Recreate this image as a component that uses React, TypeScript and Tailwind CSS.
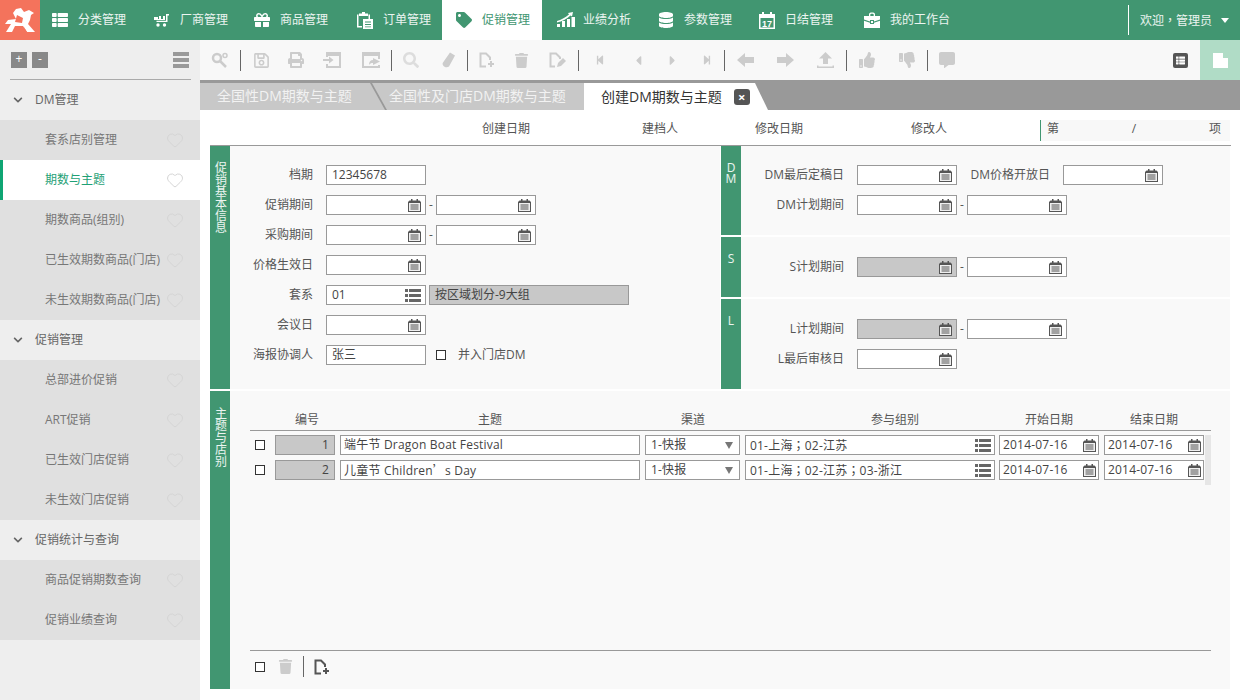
import React from "react";
import { Heart } from "lucide-react";
import {
  FaThList, FaGift, FaTag, FaDatabase, FaChevronDown, FaRegSave, FaPrint, FaSearch,
  FaTrash, FaStepBackward, FaStepForward, FaCaretLeft, FaCaretRight,
  FaThumbsUp, FaThumbsDown, FaCommentAlt,
} from "react-icons/fa";

const Logo = () => (
  <svg width="40" height="40" viewBox="0 0 40 40">
    <path fill="#fff" d="M16 9l5-1 3 4 5-2 5 3-3 2-1 5-2 4 7 8h-8l-4-6h-8l-3 6H6l5-8H5l3-4 8-1-3-6z" />
    <path fill="#f4735c" d="M17 15l6 3-1 5-7-1zM24 27l3 5h-2z" />
  </svg>
);

const CartIcon = () => (
  <svg width="16" height="16" viewBox="0 0 16 16" fill="#fff">
    <path d="M0 5h4v2h1V4h2v3h2V4h2v4H0zM12 2h3v1.500h-1.500V10H2.500V8.700h9.500z" />
    <circle cx="4" cy="13" r="1.700" />
    <circle cx="10.500" cy="13" r="1.700" />
  </svg>
);

const OrderIcon = () => (
  <svg width="16" height="17" viewBox="0 0 16 17" fill="#fff">
    <path d="M5 0h3v1.500h3V4H2V1.500h3zM0 2.500h1.500V14H5v1.500H0zM11.500 2.500H13V7h-1.500z" />
    <path d="M6 7h10v10H6z" />
    <path fill="#419671" d="M8 9.500h6v1H8zM8 12h6v1H8zM8 14.500h6v.8H8z" />
  </svg>
);

const ChartIcon = () => (
  <svg width="18" height="16" viewBox="0 0 18 16" fill="#fff">
    <path d="M0 12h3v3H0zM5 9h3v6H5zM10 7h3v8h-3zM14.500 5H18v10h-3.500z" />
    <path d="M0 9c4-1 8-3.500 12-6.500L11 1l5-1-1 4.500-1.500-1C9.500 7 5 9.500 0 10.500z" />
  </svg>
);

const CalendarDayIcon = () => (
  <svg width="16" height="17" viewBox="0 0 16 17">
    <path fill="#fff" d="M0 2h3V0h2v2h6V0h2v2h3v15H0zm1.500 4v9.500h13V6z" />
    <text x="8" y="14.500" textAnchor="middle" fontSize="9" fontWeight="700" fill="#fff" fontFamily="Liberation Sans, sans-serif">17</text>
  </svg>
);

const CaseIcon = () => (
  <svg width="16" height="16" viewBox="0 0 16 16" fill="#fff">
    <path d="M5 2.500C5 1 6 .5 8 .5s3 .5 3 2V4h-1.300V2.800c0-.7-.5-1-1.700-1s-1.700.3-1.700 1V4H5z" />
    <path d="M0 4h16v3.500l-6 2V8H6v1.500l-6-2zM0 8.700l6 2V12h4v-1.300l6-2V16H0zM7 9h2v2H7z" />
  </svg>
);

const SignInIcon = () => (
  <svg width="18" height="16" viewBox="0 0 18 16" fill="#ccc">
    <path d="M3 0h15v16H3v-4h2v2h11V4H5v1H3zM0 7h6V4.500L10.500 8 6 11.500V9H0z" />
  </svg>
);

const ShareIcon = () => (
  <svg width="20" height="16" viewBox="0 0 20 16" fill="#ccc">
    <path d="M0 0h18v7h-2V4H2v10h14v-1h2v3H0zM11 6l7 3.500L11 13v-2c-2 0-3 .5-4 2 0-3.500 1.500-5 4-5z" />
  </svg>
);

const SearchUserIcon = () => (
  <svg width="18" height="16" viewBox="0 0 18 16" fill="none" stroke="#ccc">
    <circle cx="6" cy="6" r="4" strokeWidth="2.500" />
    <path d="M9 9l6 6" strokeWidth="2.500" />
    <circle cx="14" cy="3.500" r="2" strokeWidth="1.500" />
  </svg>
);

const EraserIcon = () => (
  <svg width="14" height="16" viewBox="0 0 14 16" fill="#ccc">
    <path d="M8 0.500l5 3-6 11c-1.500 1.200-4 1-5.500-.5-1-1.200-1.200-2.500-.5-3.500z" />
  </svg>
);

const BlockArrow = ({ left }: { left?: boolean }) => (
  <svg width="17" height="14" viewBox="0 0 17 14" fill="#ccc" className={left ? "-scale-x-100" : ""}>
    <path d="M0 4h9V0l8 7-8 7v-4H0z" />
  </svg>
);

const FilePlusIcon = ({ color = "#ccc" }: { color?: string }) => (
  <svg width="16" height="16" viewBox="0 0 16 16" fill="none">
    <path d="M7 14.500H1.500v-13H7L11 5.500V8" stroke={color} strokeWidth="2" />
    <path d="M9 12h6M12 9v6" stroke={color} strokeWidth="2" />
  </svg>
);

const FileEditIcon = () => (
  <svg width="18" height="16" viewBox="0 0 18 16" fill="none">
    <path d="M6 14.500H1.500v-13H7L11 5.500V7" stroke="#ccc" strokeWidth="2" />
    <path d="M8 15l1-4 5-5 3 3-5 5z" fill="#ccc" />
  </svg>
);

const UploadIcon = () => (
  <svg width="17" height="16" viewBox="0 0 17 16" fill="#ccc">
    <path d="M8.500 0L15 6.500h-4V12H6V6.500H2zM0 13.500h1.500V14.500h14V13.500H17V16H0z" />
  </svg>
);

const CalIcon = () => (
  <svg width="13" height="13" viewBox="0 0 13 13" className="shrink-0">
    <path fill="#555" d="M3 0h1.500v1.500h4V0H10v1.500h1.500L13 3v10H0V3l1.500-1.500H3z" />
    <path fill="#efefef" d="M1 4h11v8H1z" />
    <path fill="#555" d="M2.500 5.500h8v1h-8zM2.500 7.500h8v1h-8zM2.500 9.500h8v1h-8z" />
  </svg>
);

const ListIcon = () => (
  <svg width="16" height="13" viewBox="0 0 16 13" fill="#666" className="shrink-0">
    <path d="M0 0h3v3H0zM4 0h12v3H4zM0 5h3v3H0zM4 5h12v3H4zM0 10h3v3H0zM4 10h12v3H4z" />
  </svg>
);

// punctuation that sits in the middle of its cell, as in the original font
const Mid = ({ children }: { children: React.ReactNode }) => (
  <span className="[font-family:'Noto_Sans_CJK_TC',sans-serif]">{children}</span>
);

const Box = ({ w, value, gray, icon, right, pad = "px-[5px]" }: { w: string; value?: React.ReactNode; gray?: boolean; icon?: "cal" | "list"; right?: boolean; pad?: string }) => (
  <div className={`${w} ${pad} h-5 shrink-0 border border-[#999] flex items-center text-[12px] text-[#444] leading-none ${gray ? "bg-[#c8c8c8]" : "bg-white"} ${right ? "justify-end" : "justify-between"}`}>
    <span className="whitespace-pre">{value}</span>
    {icon === "cal" && <span className="-mr-[1px]"><CalIcon /></span>}
    {icon === "list" && <span className="-mr-[1px]"><ListIcon /></span>}
  </div>
);

const Dash = ({ w }: { w: string }) => <span className={`${w} text-center text-[12px] text-[#555]`}>-</span>;

const Check = ({ cls = "" }: { cls?: string }) => <span className={`block w-[10px] h-[10px] border border-[#333] bg-white shrink-0 ${cls}`} />;

const Strip = ({ text, top, tight }: { text: string; top: string; tight?: boolean }) => (
  <div className={`w-5 shrink-0 bg-[#419671] flex justify-center pr-px text-white/90 text-[12px] leading-5 ${top}`}>
    <span className={`[writing-mode:vertical-rl] [text-orientation:upright] ${tight ? "tracking-[-6px]" : ""}`}>{text}</span>
  </div>
);

const NAV = [
  { label: "分类管理", w: "w-[102px]", icon: <FaThList className="text-[16px]" /> },
  { label: "厂商管理", w: "w-[100px]", icon: <CartIcon /> },
  { label: "商品管理", w: "w-[103px]", icon: <FaGift className="text-[16px]" /> },
  { label: "订单管理", w: "w-[97px]", icon: <OrderIcon /> },
  { label: "促销管理", w: "w-[100px] mr-[3px]", icon: <FaTag className="text-[16px]" />, active: true },
  { label: "业绩分析", w: "w-[101px]", icon: <ChartIcon /> },
  { label: "参数管理", w: "w-[101px]", icon: <FaDatabase className="text-[16px]" /> },
  { label: "日结管理", w: "w-[105px]", icon: <CalendarDayIcon /> },
  { label: "我的工作台", w: "w-[120px]", icon: <CaseIcon /> },
];

const MENU = [
  { title: "DM管理", items: [["套系店别管理"], ["期数与主题", "active"], ["期数商品(组别)"], ["已生效期数商品(门店)"], ["未生效期数商品(门店)"]] },
  { title: "促销管理", items: [["总部进价促销"], ["ART促销"], ["已生效门店促销"], ["未生效门店促销"]] },
  { title: "促销统计与查询", items: [["商品促销期数查询"], ["促销业绩查询"]] },
];

// widths of the toolbar cells, the separators sit between groups
const TOOLS: { w: string; icon?: React.ReactNode; sep?: boolean }[] = [
  { w: "w-[40px]", icon: <SearchUserIcon /> },
  { w: "", sep: true },
  { w: "w-[40px]", icon: <FaRegSave className="text-[17px] text-[#ccc]" /> },
  { w: "w-[30px]", icon: <FaPrint className="text-[16px] text-[#ccc]" /> },
  { w: "w-[42px]", icon: <SignInIcon /> },
  { w: "w-[38px]", icon: <ShareIcon /> },
  { w: "", sep: true },
  { w: "w-[38px]", icon: <FaSearch className="text-[16px] text-[#ddd]" /> },
  { w: "w-[37px]", icon: <EraserIcon /> },
  { w: "", sep: true },
  { w: "w-[38px]", icon: <FilePlusIcon /> },
  { w: "w-[31px]", icon: <FaTrash className="text-[15px] text-[#ccc]" /> },
  { w: "w-[41px]", icon: <FileEditIcon /> },
  { w: "", sep: true },
  { w: "w-[42px]", icon: <FaStepBackward className="text-[10px] text-[#ccc]" /> },
  { w: "w-[35px]", icon: <FaCaretLeft className="text-[15px] text-[#ccc]" /> },
  { w: "w-[33px]", icon: <FaCaretRight className="text-[15px] text-[#ccc]" /> },
  { w: "w-[35px]", icon: <FaStepForward className="text-[10px] text-[#ccc]" /> },
  { w: "", sep: true },
  { w: "w-[40px]", icon: <BlockArrow left /> },
  { w: "w-[40px]", icon: <BlockArrow /> },
  { w: "w-[41px]", icon: <UploadIcon /> },
  { w: "", sep: true },
  { w: "w-[39px]", icon: <FaThumbsUp className="text-[16px] text-[#ccc]" /> },
  { w: "w-[41px]", icon: <FaThumbsDown className="text-[16px] text-[#ccc]" /> },
  { w: "", sep: true },
  { w: "w-[38px]", icon: <FaCommentAlt className="text-[16px] text-[#ccc]" /> },
];

const LeftRow = ({ label, children }: { label: string; children: React.ReactNode }) => (
  <div className="flex items-center h-5">
    <span className="w-[83px] text-right text-[12px] text-[#555] mr-[13px] shrink-0">{label}</span>
    {children}
  </div>
);

const RightRow = ({ label, children }: { label: string; children: React.ReactNode }) => (
  <div className="flex items-center h-5">
    <span className="w-[103px] text-right text-[12px] text-[#555] mr-[13px] shrink-0">{label}</span>
    {children}
  </div>
);

const ROWS: { no: string; title: React.ReactNode; group: React.ReactNode }[] = [
  { no: "1", title: "端午节 Dragon Boat Festival", group: <>01-上海<Mid>；</Mid>02-江苏</> },
  { no: "2", title: <>儿童节 Children<Mid>’</Mid>s Day</>, group: <>01-上海<Mid>；</Mid>02-江苏<Mid>；</Mid>03-浙江</> },
];

export default function App() {
  return (
    <div className="w-[1240px] h-[700px] overflow-hidden bg-white flex flex-col [font-family:'Open_Sans','Noto_Sans_CJK_SC',sans-serif]">
      {/* top nav */}
      <div className="h-10 shrink-0 bg-[#419671] flex">
        <div className="w-10 h-10 bg-[#f4735c] shrink-0"><Logo /></div>
        {NAV.map((n) => (
          <div key={n.label} className={`${n.w} h-10 shrink-0 flex items-center text-[12px] ${n.active ? "bg-white text-[#419671] pl-[14px]" : "text-white/90 pl-3"}`}>
            <span className={`w-[26px] flex ${n.active ? "text-[#419671]" : "text-white"}`}>{n.icon}</span>
            <span>{n.label}</span>
          </div>
        ))}
        <div className="ml-auto my-[5px] w-[112px] border-l border-white flex items-center pl-[11px] text-white/90 text-[12px]">
          <span>欢迎<Mid>，</Mid>管理员</span>
          <svg width="8" height="5" viewBox="0 0 8 5" fill="#fff" className="ml-[9px]"><path d="M0 0h8L4 5z" /></svg>
        </div>
      </div>

      <div className="flex flex-1 min-h-0">
        {/* sidebar */}
        <div className="w-[200px] shrink-0 bg-[#eeeeee]">
          <div className="h-10 flex items-center pl-[11px] pr-[11px] gap-[5px] relative">
            <span className="w-4 h-4 bg-[#888] text-white text-[12px] leading-[14px] text-center">+</span>
            <span className="w-4 h-4 bg-[#888] text-white text-[12px] leading-[14px] text-center">-</span>
            <div className="ml-auto w-4 h-4 flex flex-col justify-between">
              <span className="h-[4px] bg-[#999]" />
              <span className="h-[4px] bg-[#999]" />
              <span className="h-[4px] bg-[#999]" />
            </div>
            <span className="absolute left-[10px] w-[181px] bottom-0 h-px bg-[#aaa]" />
          </div>
          {MENU.map((g) => (
            <div key={g.title}>
              <div className="h-10 flex items-center text-[12px] text-[#666]">
                <FaChevronDown className="ml-[13px] mr-[12px] text-[10px] text-[#666]" />
                {g.title}
              </div>
              {g.items.map(([label, state]) => (
                <div key={label} className={`h-10 flex items-center justify-between pr-4 text-[12px] ${state ? "bg-white text-[#1fa176] border-l-[3px] border-[#0fa573] pl-[42px]" : "bg-[#e0e0e0] text-[#777] pl-[45px]"}`}>
                  <span className="whitespace-nowrap">{label}</span>
                  <Heart className="w-[18px] h-[18px] shrink-0 text-[#d4d4d4]" strokeWidth={1.3} />
                </div>
              ))}
            </div>
          ))}
        </div>

        {/* main */}
        <div className="flex-1 flex flex-col min-w-0">
          <div className="h-10 shrink-0 bg-[#f8f8f8] flex items-stretch">
            {TOOLS.map((t, i) =>
              t.sep ? (
                <span key={i} className="w-px h-[21px] my-auto bg-[#666] shrink-0" />
              ) : (
                <span key={i} className={`${t.w} flex items-center justify-center shrink-0`}>{t.icon}</span>
              )
            )}
            <span className="ml-auto w-10 flex items-center justify-center">
              <span className="w-[15px] h-[15px] bg-[#555] rounded-[2px] flex items-center justify-center">
                <FaThList className="text-white text-[9px]" />
              </span>
            </span>
            <span className="w-10 bg-[#b0dcc6] flex items-center justify-center">
              <span className="w-[15px] h-[15px] bg-white flex items-start justify-end">
                <span className="w-[5px] h-[5px] bg-[#b0dcc6]" />
              </span>
            </span>
          </div>

          {/* tabs */}
          <div className="h-[30px] shrink-0 bg-[#999] pt-[3px] flex text-[14px] text-[#f2f2f2]">
            <div className="w-[185px] bg-[#c8c8c8] pl-[17px] leading-[25px] [clip-path:polygon(0_0,170px_0,185px_100%,0_100%)]">全国性DM期数与主题</div>
            <div className="w-[212px] -ml-[13px] bg-[#c8c8c8] pl-[17px] leading-[25px] [clip-path:polygon(0_0,100%_0,100%_100%,15px_100%)]">全国性及门店DM期数与主题</div>
            <div className="w-[184px] bg-white text-[#333] pl-[17px] flex items-center gap-[12px] [clip-path:polygon(0_0,171px_0,100%_100%,0_100%)]">
              <span className="whitespace-nowrap -mt-[1px]">创建DM期数与主题</span>
              <span className="w-4 h-4 bg-[#555] rounded-[3px] text-white text-[13px] leading-4 text-center font-bold shrink-0">×</span>
            </div>
          </div>

          {/* record header */}
          <div className="h-[36px] shrink-0 pt-[10px] pl-[10px]">
            <div className="w-[1021px] h-[26px] border-b border-[#999] flex text-[12px] text-[#555]">
              <span className="w-[320px] text-right">创建日期</span>
              <span className="w-[148px] text-right">建档人</span>
              <span className="w-[125px] text-right">修改日期</span>
              <span className="w-[144px] text-right">修改人</span>
              <div className="ml-[93px] w-[190px] h-[21px] bg-[#f8f8f8] border-l border-[#419671] flex justify-between pl-[6px] pr-[9px]">
                <span>第</span>
                <span>/</span>
                <span>项</span>
              </div>
            </div>
          </div>

          {/* form */}
          <div className="pl-[10px] flex gap-px h-[243px] shrink-0">
            <div className="w-[510px] bg-[#f9f9f9] flex">
              <Strip text="促销基本信息" top="pt-[15px]" />
              <div className="pt-[19px] flex flex-col gap-[10px]">
                <LeftRow label="档期"><Box w="w-[100px]" value="12345678" /></LeftRow>
                <LeftRow label="促销期间"><Box w="w-[100px]" icon="cal" /><Dash w="w-[10px]" /><Box w="w-[100px]" icon="cal" /></LeftRow>
                <LeftRow label="采购期间"><Box w="w-[100px]" icon="cal" /><Dash w="w-[10px]" /><Box w="w-[100px]" icon="cal" /></LeftRow>
                <LeftRow label="价格生效日"><Box w="w-[100px]" icon="cal" /></LeftRow>
                <LeftRow label="套系"><Box w="w-[100px]" value="01" icon="list" /><span className="w-[3px]" /><Box w="w-[200px]" gray value="按区域划分-9大组" /></LeftRow>
                <LeftRow label="会议日"><Box w="w-[100px]" icon="cal" /></LeftRow>
                <LeftRow label="海报协调人">
                  <Box w="w-[100px]" value="张三" />
                  <Check cls="ml-[10px]" />
                  <span className="ml-[12px] text-[12px] text-[#555]">并入门店DM</span>
                </LeftRow>
              </div>
            </div>
            <div className="w-[509px] flex flex-col justify-between">
              <div className="h-[89px] bg-[#f9f9f9] flex">
                <Strip text="DM" top="pt-[13px]" tight />
                <div className="pt-[19px] flex flex-col gap-[10px]">
                  <RightRow label="DM最后定稿日">
                    <Box w="w-[100px]" icon="cal" />
                    <span className="w-[106px] text-right pr-[13px] text-[12px] text-[#555]">DM价格开放日</span>
                    <Box w="w-[100px]" icon="cal" />
                  </RightRow>
                  <RightRow label="DM计划期间"><Box w="w-[100px]" icon="cal" /><Dash w="w-[10px]" /><Box w="w-[100px]" icon="cal" /></RightRow>
                </div>
              </div>
              <div className="h-[60px] bg-[#f9f9f9] flex">
                <Strip text="S" top="pt-[13px]" />
                <div className="pt-[20px]">
                  <RightRow label="S计划期间"><Box w="w-[100px]" gray icon="cal" /><Dash w="w-[10px]" /><Box w="w-[100px]" icon="cal" /></RightRow>
                </div>
              </div>
              <div className="h-[90px] bg-[#f9f9f9] flex">
                <Strip text="L" top="pt-[13px]" />
                <div className="pt-[20px] flex flex-col gap-[10px]">
                  <RightRow label="L计划期间"><Box w="w-[100px]" gray icon="cal" /><Dash w="w-[10px]" /><Box w="w-[100px]" icon="cal" /></RightRow>
                  <RightRow label="L最后审核日"><Box w="w-[100px]" icon="cal" /></RightRow>
                </div>
              </div>
            </div>
          </div>

          {/* table section */}
          <div className="ml-[10px] mt-[2px] w-[1020px] h-[298px] shrink-0 bg-[#f9f9f9] flex">
            <Strip text="主题与店别" top="pt-[16px]" />
            <div className="ml-5 w-[961px] flex flex-col pt-[18px]">
              <div className="h-[22px] shrink-0 border-b border-[#999] flex items-center text-[12px] text-[#555]">
                <span className="ml-[45px]">编号</span>
                <span className="ml-[159px]">主题</span>
                <span className="ml-[179px]">渠道</span>
                <span className="ml-[166px]">参与组别</span>
                <span className="ml-[106px]">开始日期</span>
                <span className="ml-[57px]">结束日期</span>
              </div>
              <div className="flex flex-1 pt-[4px]">
                <div className="w-[955px] flex flex-col gap-[5px] tracking-[0.2px]">
                  {ROWS.map((r) => (
                    <div key={r.no} className="flex items-center h-5">
                      <span className="w-[25px] pl-[5px]"><Check /></span>
                      <Box w="w-[60px]" gray right value={r.no} />
                      <span className="w-[5px]" />
                      <Box w="w-[300px]" pad="px-[3px]" value={r.title} />
                      <span className="w-[5px]" />
                      <div className="w-[95px] h-5 border border-[#999] bg-white flex items-center justify-between pl-[5px] pr-[6px] text-[12px] text-[#444]">
                        <span>1-快报</span>
                        <svg width="8" height="7" viewBox="0 0 8 7" fill="#777"><path d="M0 0h8L4 7z" /></svg>
                      </div>
                      <span className="w-[5px]" />
                      <Box w="w-[250px]" pad="px-[4px]" value={r.group} icon="list" />
                      <span className="w-[4px]" />
                      <Box w="w-[100px]" pad="px-[3px]" value="2014-07-16" icon="cal" />
                      <span className="w-[5px]" />
                      <Box w="w-[100px]" pad="px-[3px]" value="2014-07-16" icon="cal" />
                    </div>
                  ))}
                </div>
                <span className="w-[6px] h-[50px] bg-[#e6e6e6]" />
              </div>
              <div className="h-[39px] shrink-0 border-t border-[#999] pb-[7px] flex items-center">
                <Check cls="ml-[5px]" />
                <FaTrash className="ml-[13px] text-[15px] text-[#ccc]" />
                <span className="ml-[10px] w-px h-[21px] bg-[#666]" />
                <span className="ml-[10px]"><FilePlusIcon color="#555" /></span>
              </div>
            </div>
          </div>
        </div>
      </div>
    </div>
  );
}
